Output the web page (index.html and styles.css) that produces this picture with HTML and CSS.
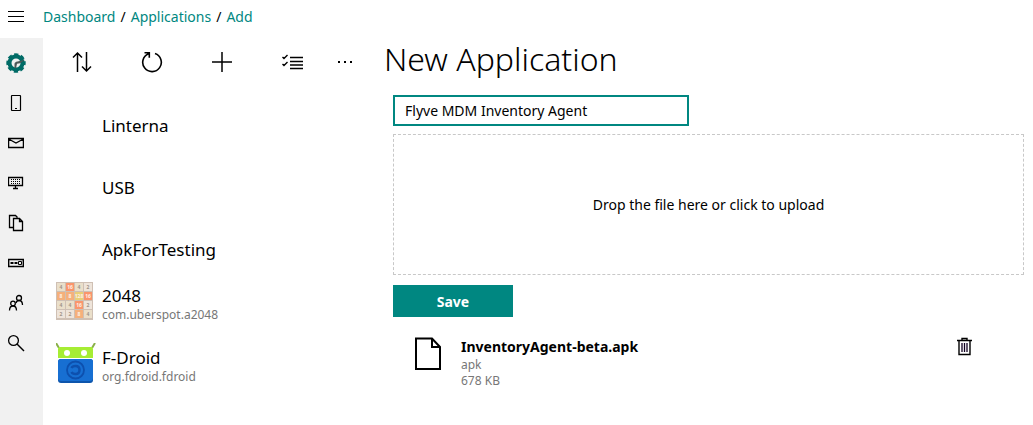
FILE: index.html
```html
<!DOCTYPE html>
<html lang="en">
<head>
<meta charset="utf-8">
<meta name="viewport" content="width=device-width, initial-scale=1">
<title>New Application</title>
<link rel="stylesheet" href="styles.css">
</head>
<body>
<header class="topbar">
  <button class="menu-button" type="button" aria-label="Menu">
    <svg width="16" height="11" viewBox="0 0 16 11"><path d="M0 .5h16M0 5.500h16M0 10.500h16" fill="none" stroke="#000" stroke-width="1.200"/></svg>
  </button>
  <nav class="breadcrumb" aria-label="Breadcrumb"><a href="#">Dashboard</a><span>/</span><a href="#">Applications</a><span>/</span><a href="#">Add</a></nav>
</header>
<div class="layout">
  <nav class="sidebar" aria-label="Sections">
    <a href="#" aria-label="Dashboard"><svg width="20" height="20" viewBox="0 0 20 20"><circle cx="10" cy="10" r="6.500" fill="none" stroke="#006b66" stroke-width="4"/><circle cx="10" cy="10" r="8.600" fill="none" stroke="#006b66" stroke-width="2.200" stroke-dasharray="4.300 2.454" stroke-dashoffset="2.150"/><path d="M8.500 15v-4q0-2 3-2.500l7.500-1.800-5 3.500-3 .5-1 4.500z" fill="#4c5757"/></svg></a>
    <a href="#" aria-label="Devices"><svg width="16" height="18" viewBox="0 0 16 18"><rect x="3.500" y="1.500" width="9" height="15" rx=".5" fill="none" stroke="#000" stroke-width="1.200"/><path d="M7 14.500h2" stroke="#000"/></svg></a>
    <a href="#" aria-label="Invitations"><svg width="16" height="12" viewBox="0 0 16 12"><path d="M.6 1.500h14.800v9H.6zM.6 2l7.400 4 7.400-4" fill="none" stroke="#000" stroke-width="1.300"/></svg></a>
    <a href="#" aria-label="Fleet"><svg width="16" height="14" viewBox="0 0 16 14"><path d="M.5 1.500h14v8H.5zM5 12.500h5M7.500 10v2" fill="none" stroke="#000" stroke-width="1.300"/><path d="M3 3.500h9M3 5.500h9M3 7.500h9" stroke="#000" stroke-dasharray="1 1"/></svg></a>
    <a href="#" aria-label="Files"><svg width="16" height="18" viewBox="0 0 16 18"><path d="M5.500 13.500h-4v-12h6l2 2M5.500 4.500h6l3 3v9h-9zM11.500 4.500v3h3" fill="none" stroke="#000" stroke-width="1.300"/></svg></a>
    <a href="#" aria-label="Applications"><svg width="16" height="10" viewBox="0 0 16 10"><path d="M.7 1.500h14.600v7H.7z" fill="none" stroke="#000" stroke-width="1.400"/><path d="M2.500 4h3v2h-3zM6.500 4h3v2h-3z"/><path d="M10.500 3.500h3v3h-3z" fill="none" stroke="#000"/></svg></a>
    <a href="#" aria-label="Users"><svg width="16" height="18" viewBox="0 0 16 18"><g fill="none" stroke="#000" stroke-width="1.300"><circle cx="5" cy="9.500" r="2.300"/><path d="M1.500 16.500q0-4.500 3.500-4.500t3.500 4.500"/><circle cx="11" cy="4" r="2.500"/><path d="M8 9q.5-2.500 3-2.500 3.500 0 3.500 4.500"/></g></svg></a>
    <a href="#" aria-label="Search"><svg width="18" height="18" viewBox="0 0 18 18"><circle cx="6.500" cy="6.500" r="4.900" fill="none" stroke="#000" stroke-width="1.300"/><path d="M10 10l7 7" stroke="#000" stroke-width="1.400"/></svg></a>
  </nav>

  <section class="app-list" aria-label="Applications">
    <div class="toolbar">
      <button type="button" aria-label="Sort"><svg width="20" height="22" viewBox="0 0 20 22"><path d="M5.500 21V2M1 6.500L5.500 2 10 6.500M14.500 1v19M10 15.500l4.500 4.500 4.500-4.500" fill="none" stroke="#000" stroke-width="1.500"/></svg></button>
      <button type="button" aria-label="Refresh"><svg width="22" height="22" viewBox="0 0 22 22"><path d="M14 2.500a9.300 9.300 0 1 1-6.500.2M3.500 1.700h4.800v5" fill="none" stroke="#000" stroke-width="1.600"/></svg></button>
      <button type="button" aria-label="Add"><svg width="22" height="22" viewBox="0 0 22 22"><path d="M11 1v20M1 11h20" stroke="#000" stroke-width="1.500"/></svg></button>
      <button type="button" aria-label="Select"><svg width="22" height="18" viewBox="0 0 22 18"><path d="M9 4.500h13M9 8.500h13M9 12h13M9 15.500h13M1.500 4L3 5.500 6.500 2M1.500 11L3 12.500 6.500 9" fill="none" stroke="#000" stroke-width="1.400"/></svg></button>
      <button type="button" aria-label="More"><svg width="16" height="4" viewBox="0 0 16 4"><path d="M1 1h2v2H1zM7 1h2v2H7zM13 1h2v2h-2z"/></svg></button>
    </div>
    <ul>
      <li><span class="thumb"></span><a href="#">Linterna</a></li>
      <li><span class="thumb"></span><a href="#">USB</a></li>
      <li><span class="thumb"></span><a href="#">ApkForTesting</a></li>
      <li class="detailed">
        <svg class="thumb" viewBox="0 0 40 40">
          <rect x="0" y="1" width="37" height="38" fill="#cfc0b4"/>
          <g fill="#eadfca"><path d="M1 2h8v8H1zM19 2h8v8h-8zM1 20h8v8H1zM10 20h8v8h-8zM28 29h8v8h-8z"/></g>
          <g fill="#eee4da"><path d="M28 2h8v8h-8zM28 20h8v8h-8zM1 29h8v8H1zM10 29h8v8h-8z"/></g>
          <g fill="#f5b07b"><path d="M1 11h8v8H1zM10 11h8v8h-8zM19 29h8v8h-8z"/></g>
          <g fill="#fa956c"><path d="M10 2h8v8h-8zM28 11h8v8h-8zM19 20h8v8h-8z"/></g>
          <path d="M19 11h8v8h-8z" fill="#e9cf76"/>
          <g class="tile-numbers" fill="#a09388"><text x="5" y="8">4</text><text x="23" y="8">4</text><text x="32" y="8">2</text><text x="5" y="26">4</text><text x="14" y="26">4</text><text x="32" y="26">2</text><text x="5" y="35">2</text><text x="14" y="35">2</text><text x="32" y="35">4</text></g>
          <g class="tile-numbers" fill="#fff0e5"><text x="14" y="8">16</text><text x="5" y="17">8</text><text x="14" y="17">8</text><text x="23" y="17">128</text><text x="32" y="17">16</text><text x="23" y="26">16</text><text x="23" y="35">8</text></g>
        </svg>
        <a href="#">2048<small>com.uberspot.a2048</small></a>
      </li>
      <li class="detailed">
        <svg class="thumb" viewBox="0 0 40 40">
          <path d="M0 0l3 5M39 0l-3 5" stroke="#8ab04a" stroke-width="2"/>
          <path d="M2 15V6q0-2 2-2h31q2 0 2 2v9z" fill="#a6ed34"/>
          <circle cx="11" cy="10" r="3" fill="#fff"/><circle cx="28" cy="10" r="3" fill="#fff"/>
          <rect x="2" y="16" width="35" height="24" rx="3" fill="#0d55ac"/><rect x="2" y="16" width="35" height="22" rx="3" fill="#176fd2"/>
          <circle cx="19.500" cy="27" r="8.500" fill="none" stroke="#0d50ae" stroke-width="1.800"/>
          <path d="M15.500 25q1-2 4-2 4 0 4 4t-4 4q-3 0-4-2" fill="none" stroke="#0d50ae" stroke-width="2.500"/>
        </svg>
        <a href="#">F-Droid<small>org.fdroid.fdroid</small></a>
      </li>
    </ul>
  </section>

  <main class="content">
    <h1>New Application</h1>
    <form class="upload-form">
      <input class="name-input" type="text" aria-label="Application name" value="Flyve MDM Inventory Agent">
      <button class="dropzone" type="button">Drop the file here or click to upload</button>
      <button class="save" type="button">Save</button>
      <div class="file">
        <svg width="28" height="34" viewBox="0 0 28 34"><path d="M2 1.500h16L26 10v22H2zM18 1.500V10h8" fill="none" stroke="#000" stroke-width="2"/></svg>
        <div class="file-info"><strong>InventoryAgent-beta.apk</strong><span>apk</span><span>678 KB</span></div>
        <button class="delete" type="button" aria-label="Delete"><svg width="16" height="20" viewBox="0 0 16 20"><path d="M0 3.500h15M5 3.500v-2h5v2M2 3.500v14h11v-14" fill="none" stroke="#000" stroke-width="1.400"/><path d="M5 6v9M7.500 6v9M10 6v9" stroke="#102" stroke-width="1.300"/></svg></button>
      </div>
    </form>
  </main>
</div>
</body>
</html>
```
FILE: styles.css
```css
* { box-sizing: border-box; }
body {
  margin: 0;
  min-height: 100vh;
  display: flex;
  flex-direction: column;
  background: #fff;
  color: #000;
  font-family: "Noto Sans", "Open Sans", sans-serif;
  font-size: 14px;
}
button { padding: 0; border: 0; background: none; color: inherit; font: inherit; cursor: pointer; }
a { color: inherit; text-decoration: none; }
svg { display: block; flex-shrink: 0; }
.topbar { height: 38px; display: flex; align-items: center; padding-bottom: 5px; }
.menu-button { width: 43px; padding-left: 8px; }
.breadcrumb { display: flex; gap: 5px; }
.breadcrumb a { color: #008781; }
.layout { flex: 1; display: flex; }
.sidebar { width: 43px; padding: 5px 11px 0 0; display: flex; flex-direction: column; background: #f1f1f1; }
.sidebar a { height: 40px; display: flex; align-items: center; justify-content: center; }
.app-list { width: 341px; flex-shrink: 0; }
.toolbar { height: 47px; display: grid; grid-template-columns: 70px 70px 70px 70px 36px; padding-left: 4px; }
.toolbar button { display: flex; align-items: center; justify-content: center; }
.app-list ul { margin: 0; padding: 10px 12px 0; list-style: none; }
.app-list li { height: 62px; display: flex; align-items: center; gap: 6px; }
.app-list .detailed { align-items: flex-start; }
.detailed a { padding-top: 4px; }
.thumb { width: 40px; height: 40px; margin-left: 1px; }
.app-list a { font-size: 17px; line-height: 22px; }
.app-list small { display: block; color: #777; font-size: 12px; line-height: 16px; }
.tile-numbers { font-size: 5px; font-weight: 700; text-anchor: middle; }
.content { flex: 1; min-width: 0; padding-right: 9px; }
h1 { margin: 0; font-size: 32px; font-weight: 300; line-height: 42px; }
.upload-form { display: flex; flex-direction: column; align-items: flex-start; padding: 15px 0 0 9px; }
.name-input { width: 296px; height: 31px; padding: 0 10px 1px; border: 2px solid #008781; border-radius: 0; outline: 0; background: #fff; color: #000; font: inherit; }
.dropzone { width: 100%; height: 141px; margin: 8px 0 10px; border: 1px dashed #c8c8c8; }
.save { width: 120px; height: 32px; background: #008781; color: #fff; font-weight: 700; }
.file { width: 100%; display: flex; align-items: flex-start; padding: 20px 51px 0 21px; }
.file-info { flex: 1; display: flex; flex-direction: column; padding-left: 19px; font-size: 12px; line-height: 16px; color: #777; }
.file-info strong { color: #000; font-size: 14px; line-height: 20px; }
```
